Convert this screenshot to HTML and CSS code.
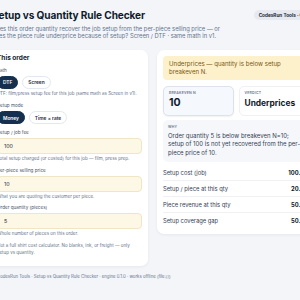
FILE: index.html
```html
<!DOCTYPE html>
<html>
<head>
  <title>Setup vs Quantity Rule Checker</title>
  <link rel="stylesheet" href="styles.css">
</head>
<body>
  <div class="page">
    <header class="top">
      <div class="intro">
        <h1>Setup vs Quantity Rule Checker</h1>
        <p class="lead">Does this order quantity recover the job setup from the per-piece selling price — or does the piece rule underprice because of setup? Screen / DTF · same math in v1.</p>
      </div>
      <span class="badge">CodesRun Tools · Offline</span>
    </header>

    <main class="grid">
      <section class="card inputs">
        <h2>This order</h2>

        <div class="field">
          <span class="label">Path</span>
          <div class="pills">
            <button class="pill on">DTF</button>
            <button class="pill">Screen</button>
          </div>
          <div class="hint">DTF: film/press setup fee for this job (same math as Screen in v1).</div>
        </div>

        <div class="field">
          <span class="label">Setup mode</span>
          <div class="pills">
            <button class="pill on">Money</button>
            <button class="pill">Time × rate</button>
          </div>
        </div>

        <div class="field">
          <label class="label" for="setupFee">Setup / job fee</label>
          <input class="box" id="setupFee" type="text" value="100">
          <div class="hint">Total setup charged (or costed) for this job — film, press prep.</div>
        </div>

        <div class="field">
          <label class="label" for="piecePrice">Per-piece selling price</label>
          <input class="box" id="piecePrice" type="text" value="10">
          <div class="hint">What you are quoting the customer per piece.</div>
        </div>

        <div class="field">
          <label class="label" for="qty">Order quantity (pieces)</label>
          <input class="box" id="qty" type="text" value="5">
          <div class="hint">Whole number of pieces on this order.</div>
        </div>

        <p class="note">Not a full shirt cost calculator. No blanks, ink, or freight — only setup vs quantity.</p>
      </section>

      <section class="card result">
        <div class="alert">Underprices — quantity is below setup breakeven N.</div>

        <div class="stats">
          <div class="stat main">
            <div class="stat-label">Breakeven N</div>
            <div class="stat-value big">10</div>
          </div>
          <div class="stat">
            <div class="stat-label">Verdict</div>
            <div class="stat-value">Underprices</div>
          </div>
        </div>

        <div class="why">
          <div class="stat-label">Why</div>
          <p>Order quantity 5 is below breakeven N=10; setup of 100 is not yet recovered from the per-piece price of 10.</p>
        </div>

        <table class="rows">
          <tr><td>Setup cost (job)</td><td class="num">100.00</td></tr>
          <tr><td>Setup / piece at this qty</td><td class="num">20.00</td></tr>
          <tr><td>Piece revenue at this qty</td><td class="num">50.00</td></tr>
          <tr><td>Setup coverage gap</td><td class="num">50.00</td></tr>
        </table>
      </section>
    </main>

    <footer class="foot">CodesRun Tools · Setup vs Quantity Rule Checker · engine 0.1.0 · works offline (file://)</footer>
  </div>
</body>
</html>
```
FILE: styles.css
```css
html, body {
  overflow: hidden;
}

body {
  margin: 0;
  background: #f3f5f9;
  font-family: Inter, "Noto Sans", sans-serif;
  color: #1e293b;
}

.page {
  width: 328px;
  margin-left: -8px;
  padding-top: 8px;
}

.top {
  display: flex;
  justify-content: space-between;
  align-items: flex-start;
}

h1 {
  margin: 0;
  font-size: 10.1px;
  line-height: 14px;
  font-weight: 700;
  color: #0f1b2d;
  letter-spacing: -0.1px;
}

.lead {
  margin: 2.5px 0 0;
  max-width: 231px;
  font-size: 5.8px;
  line-height: 7px;
  color: #64748b;
}

.badge {
  flex-shrink: 0;
  margin-top: 2px;
  padding: 0 5px;
  height: 10px;
  line-height: 10px;
  border-radius: 999px;
  background: #e6eaf0;
  font-size: 4.7px;
  font-weight: 700;
  color: #1e293b;
}

.grid {
  display: grid;
  grid-template-columns: 156px 1fr;
  gap: 9px;
  align-items: start;
  margin-top: 11.5px;
}

.card {
  background: #fff;
  border-radius: 7px;
  box-shadow: 0 1px 3px rgba(15, 23, 42, 0.06);
}

.inputs {
  padding: 4px 6px 10.5px 5px;
}

h2 {
  margin: 0;
  font-size: 6.5px;
  line-height: 8px;
  font-weight: 700;
  color: #0f1b2d;
}

.field {
  margin-top: 5.7px;
}

.label {
  display: block;
  font-size: 4.6px;
  line-height: 6px;
  color: #475569;
  margin-bottom: 2px;
}

.pills {
  display: flex;
  gap: 4px;
}

.pill {
  height: 13.5px;
  padding: 0 5px;
  border: 1px solid #e2e8f0;
  border-radius: 999px;
  background: #fff;
  font-family: inherit;
  font-size: 4.8px;
  font-weight: 600;
  color: #1e293b;
}

.pill.on {
  background: #15304f;
  border-color: #15304f;
  color: #fff;
}

.hint {
  margin-top: 2px;
  font-size: 4.5px;
  line-height: 6px;
  color: #64748b;
}

.box {
  display: block;
  box-sizing: border-box;
  width: 100%;
  height: 16px;
  margin: 0;
  padding: 0 6px;
  border: 1px solid #f0e6c6;
  border-radius: 4px;
  background: #fdf7e5;
  font-family: inherit;
  font-size: 5.3px;
  color: #1e293b;
}

.note {
  margin: 4.5px 0 0;
  font-size: 4.5px;
  line-height: 7px;
  color: #64748b;
}

.result {
  padding: 6px 11px 6px 6px;
}

.alert {
  padding: 4px 6px;
  border-radius: 4px;
  background: #fdf1cb;
  font-size: 6.1px;
  line-height: 8px;
  color: #7a5612;
}

.stats {
  display: grid;
  grid-template-columns: 1fr 1fr;
  gap: 5px;
  margin-top: 6px;
}

.stat {
  padding: 4px 5px 6px;
  border: 1px solid #eef1f5;
  border-radius: 5px;
  background: #fff;
}

.stat.main {
  background: #f5f8fc;
  border-color: #dde3ec;
  box-shadow: 0 1px 2px rgba(15, 23, 42, 0.06);
}

.stat-label {
  font-size: 3.5px;
  line-height: 5px;
  font-weight: 600;
  letter-spacing: 0.2px;
  text-transform: uppercase;
  color: #64748b;
}

.stat-value {
  margin-top: 1px;
  font-size: 8.4px;
  line-height: 12px;
  font-weight: 700;
  color: #0f1b2d;
}

.stat-value.big {
  font-size: 10.5px;
}

.why {
  margin-top: 4px;
  padding: 4.5px 5px 5px;
  border-radius: 5px;
  background: #f5f7fa;
}

.why p {
  margin: 2.5px 0 0;
  font-size: 6px;
  line-height: 8.3px;
  color: #334155;
}

.rows {
  width: 100%;
  margin-top: 3px;
  border-collapse: collapse;
}

.rows td {
  height: 15px;
  padding: 0;
  border-bottom: 1px solid #eef1f5;
  font-size: 5.8px;
  color: #334155;
}

.rows tr:last-child td {
  border-bottom: none;
}

.rows .num {
  text-align: right;
  padding-right: 1px;
  font-weight: 700;
  color: #0f172a;
}

.foot {
  margin-top: 8px;
  padding-left: 5px;
  font-size: 4.3px;
  line-height: 6px;
  color: #64748b;
}
```
